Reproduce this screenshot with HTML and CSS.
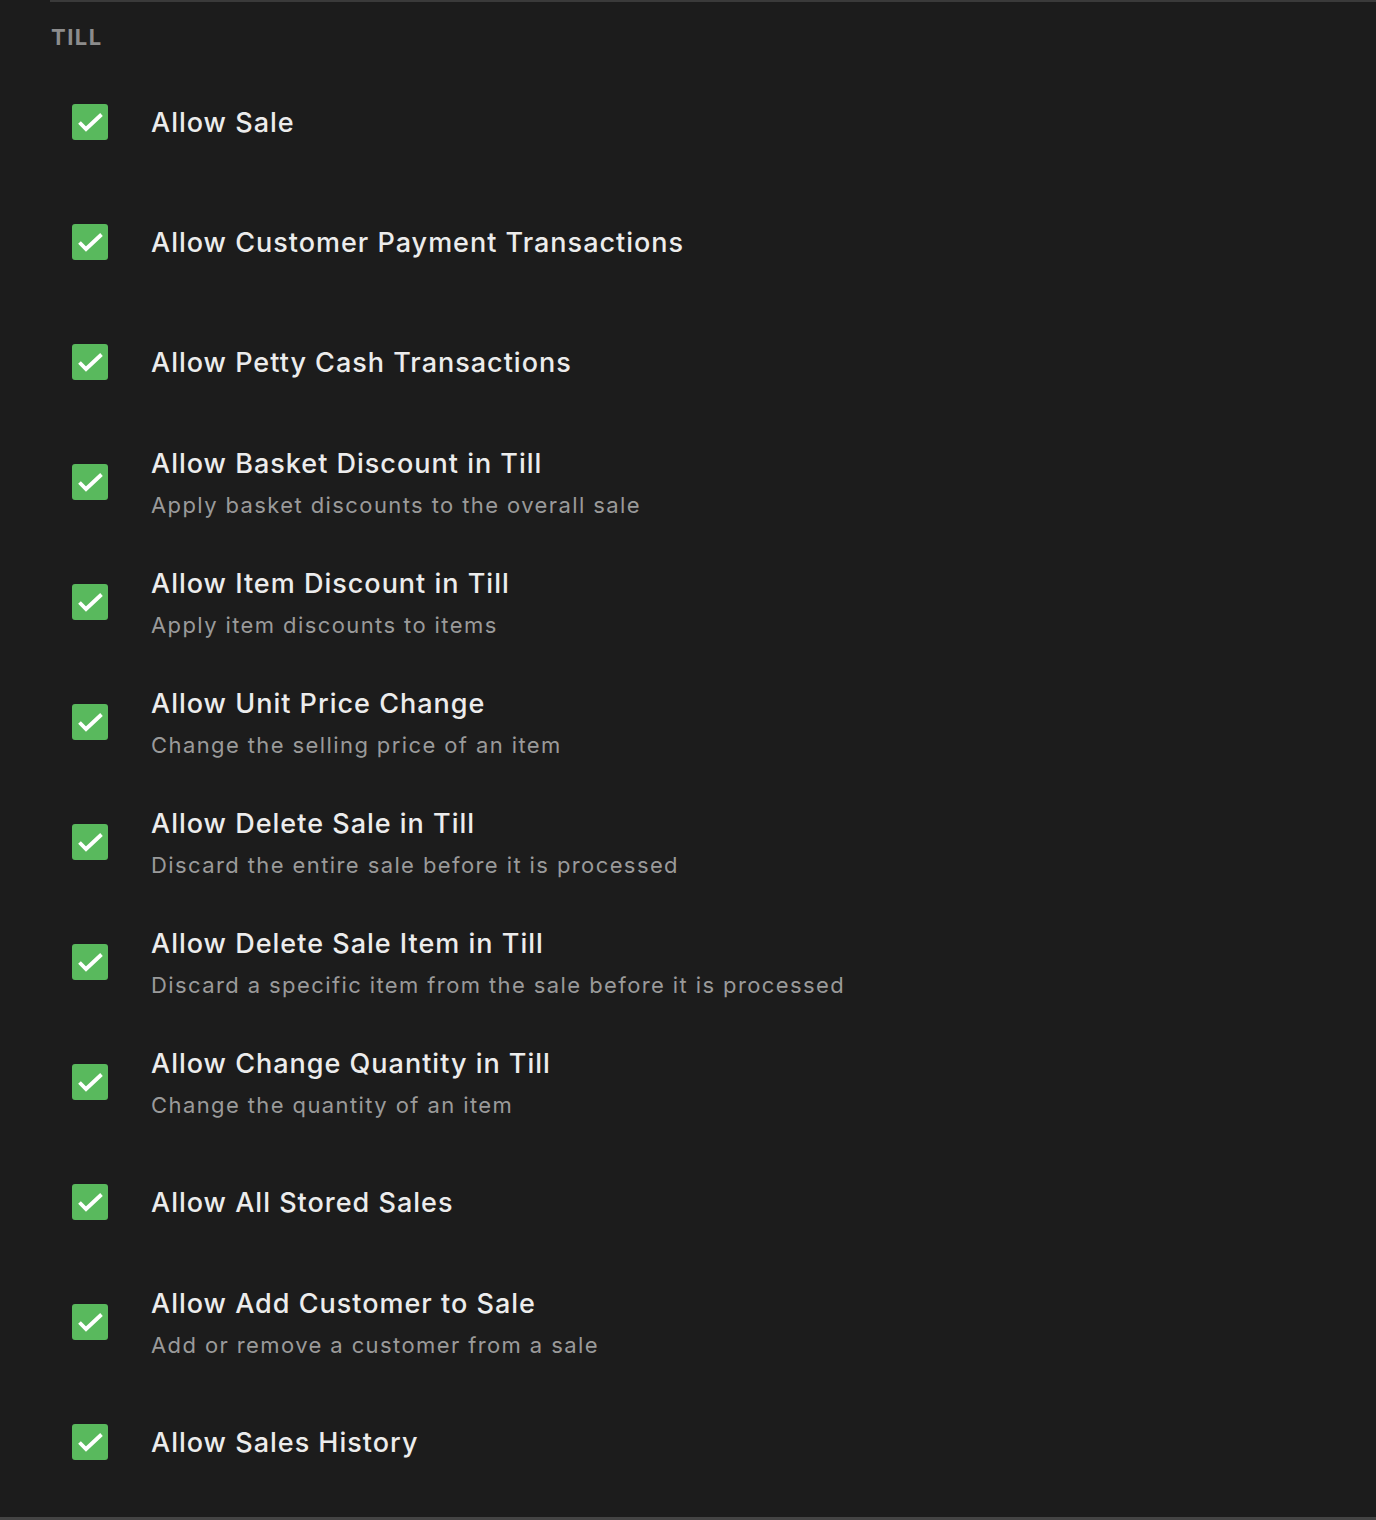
FILE: index.html
```html
<!DOCTYPE html>
<html lang="en">
<head>
  <meta charset="UTF-8" />
  <title>Till Permissions</title>
  <link rel="stylesheet" href="styles.css">
</head>
<body>
  <section class="section">
    <h2 class="section-title">TILL</h2>
    <ul class="perm-list">
      <li class="perm">
        <span class="check"><svg viewBox="0 0 36 36"><path d="M7.5 18.5L14 25L29.5 10.5"/></svg></span>
        <div class="perm-text"><div class="perm-name">Allow Sale</div></div>
      </li>
      <li class="perm">
        <span class="check"><svg viewBox="0 0 36 36"><path d="M7.5 18.5L14 25L29.5 10.5"/></svg></span>
        <div class="perm-text"><div class="perm-name">Allow Customer Payment Transactions</div></div>
      </li>
      <li class="perm">
        <span class="check"><svg viewBox="0 0 36 36"><path d="M7.5 18.5L14 25L29.5 10.5"/></svg></span>
        <div class="perm-text"><div class="perm-name">Allow Petty Cash Transactions</div></div>
      </li>
      <li class="perm">
        <span class="check"><svg viewBox="0 0 36 36"><path d="M7.5 18.5L14 25L29.5 10.5"/></svg></span>
        <div class="perm-text has-desc">
          <div class="perm-name">Allow Basket Discount in Till</div>
          <div class="perm-desc">Apply basket discounts to the overall sale</div>
        </div>
      </li>
      <li class="perm">
        <span class="check"><svg viewBox="0 0 36 36"><path d="M7.5 18.5L14 25L29.5 10.5"/></svg></span>
        <div class="perm-text has-desc">
          <div class="perm-name">Allow Item Discount in Till</div>
          <div class="perm-desc">Apply item discounts to items</div>
        </div>
      </li>
      <li class="perm">
        <span class="check"><svg viewBox="0 0 36 36"><path d="M7.5 18.5L14 25L29.5 10.5"/></svg></span>
        <div class="perm-text has-desc">
          <div class="perm-name">Allow Unit Price Change</div>
          <div class="perm-desc">Change the selling price of an item</div>
        </div>
      </li>
      <li class="perm">
        <span class="check"><svg viewBox="0 0 36 36"><path d="M7.5 18.5L14 25L29.5 10.5"/></svg></span>
        <div class="perm-text has-desc">
          <div class="perm-name">Allow Delete Sale in Till</div>
          <div class="perm-desc">Discard the entire sale before it is processed</div>
        </div>
      </li>
      <li class="perm">
        <span class="check"><svg viewBox="0 0 36 36"><path d="M7.5 18.5L14 25L29.5 10.5"/></svg></span>
        <div class="perm-text has-desc">
          <div class="perm-name">Allow Delete Sale Item in Till</div>
          <div class="perm-desc">Discard a specific item from the sale before it is processed</div>
        </div>
      </li>
      <li class="perm">
        <span class="check"><svg viewBox="0 0 36 36"><path d="M7.5 18.5L14 25L29.5 10.5"/></svg></span>
        <div class="perm-text has-desc">
          <div class="perm-name">Allow Change Quantity in Till</div>
          <div class="perm-desc">Change the quantity of an item</div>
        </div>
      </li>
      <li class="perm">
        <span class="check"><svg viewBox="0 0 36 36"><path d="M7.5 18.5L14 25L29.5 10.5"/></svg></span>
        <div class="perm-text"><div class="perm-name">Allow All Stored Sales</div></div>
      </li>
      <li class="perm">
        <span class="check"><svg viewBox="0 0 36 36"><path d="M7.5 18.5L14 25L29.5 10.5"/></svg></span>
        <div class="perm-text has-desc">
          <div class="perm-name">Allow Add Customer to Sale</div>
          <div class="perm-desc">Add or remove a customer from a sale</div>
        </div>
      </li>
      <li class="perm">
        <span class="check"><svg viewBox="0 0 36 36"><path d="M7.5 18.5L14 25L29.5 10.5"/></svg></span>
        <div class="perm-text"><div class="perm-name">Allow Sales History</div></div>
      </li>
    </ul>
  </section>
  <div class="bottom-rule"></div>
</body>
</html>
```

FILE: styles.css
```css
* {
  box-sizing: border-box;
}

html, body {
  margin: 0;
  background: #1c1c1c;
}

body {
  font-family: Inter, "Noto Sans", sans-serif;
  color: #e8e8e8;
  height: 1520px;
  display: flex;
  flex-direction: column;
  overflow: hidden;
}

.section {
  margin-left: 50px;
  padding-top: 1px;
  border-top: 2px solid #3a3a3a;
  flex: 1;
}

.section-title {
  margin: 0;
  padding: 21px 0 0 1px;
  height: 59px;
  font-size: 22px;
  font-weight: 700;
  letter-spacing: 1.5px;
  color: #8c8c8c;
  line-height: 26px;
}

.perm-list {
  list-style: none;
  margin: 0;
  padding: 0;
}

.perm {
  height: 120px;
  display: flex;
  align-items: center;
  padding-left: 22px;
  gap: 43px;
}

.check {
  width: 36px;
  height: 36px;
  flex: none;
  border-radius: 3px;
  background: #59b95d;
  display: flex;
}

.check svg {
  width: 36px;
  height: 36px;
  fill: none;
  stroke: #fff;
  stroke-width: 3.8;
  stroke-linecap: butt;
}

.perm-text {
  display: flex;
  flex-direction: column;
  gap: 9px;
  padding-top: 1px;
}

.perm-text.has-desc {
  padding-top: 3px;
}

.perm-name {
  font-size: 27px;
  font-weight: 500;
  letter-spacing: 1px;
  line-height: 34px;
  color: #ececec;
}

.perm-desc {
  font-size: 22px;
  letter-spacing: 1.4px;
  line-height: 30px;
  color: #9a9a9a;
}

.bottom-rule {
  height: 3px;
  background: #444;
  flex: none;
}
```
